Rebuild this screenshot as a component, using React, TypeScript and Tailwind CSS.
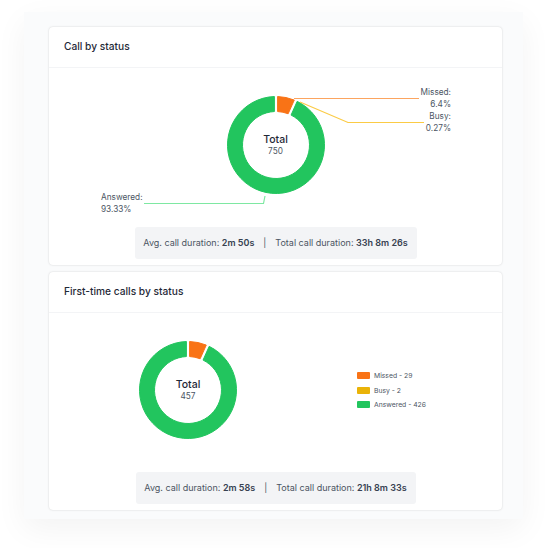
const pt = (cx: number, cy: number, r: number, deg: number) => {
  const a = (deg * Math.PI) / 180;
  return `${(cx + r * Math.sin(a)).toFixed(2)} ${(cy - r * Math.cos(a)).toFixed(2)}`;
};

const slice = (start: number, end: number, gap = 1.6) => {
  const R = 48.5;
  const r = 33.5;
  const c = 49;
  const oa = (Math.asin(gap / R) * 180) / Math.PI;
  const ia = (Math.asin(gap / r) * 180) / Math.PI;
  const large = end - start > 180 ? 1 : 0;
  return `M${pt(c, c, R, start + oa)} A${R} ${R} 0 ${large} 1 ${pt(c, c, R, end - oa)} L${pt(c, c, r, end - ia)} A${r} ${r} 0 ${large} 0 ${pt(c, c, r, start + ia)} Z`;
};

function Donut({ total }: { total: string }) {
  return (
    <div className="relative h-[98px] w-[98px] shrink-0">
      <svg viewBox="0 0 98 98" className="h-full w-full">
        <path d={slice(0, 24)} fill="#f97316" stroke="#f97316" strokeWidth="1" strokeLinejoin="round" />
        <path d={slice(24, 360)} fill="#22c55e" stroke="#22c55e" strokeWidth="1" strokeLinejoin="round" />
      </svg>
      <div className="absolute inset-0 flex flex-col items-center justify-center pb-[1px] text-center">
        <span className="text-[10.5px] leading-[13px] font-medium text-[#1f2937]">Total</span>
        <span className="text-[8.25px] leading-[11px] text-[#4b5563]">{total}</span>
      </div>
    </div>
  );
}

function Footer({ avg, total, width }: { avg: string; total: string; width: string }) {
  return (
    <div className={`mx-auto flex h-8 items-center justify-center rounded-[3px] bg-[#f3f4f6] text-[9px] whitespace-nowrap text-[#4b5563] ${width}`}>
      <span>
        Avg. call duration: <b className="font-semibold text-[#374151]">{avg}</b>
      </span>
      <span className="mx-[9px]">|</span>
      <span>
        Total call duration: <b className="font-semibold text-[#374151]">{total}</b>
      </span>
    </div>
  );
}

function Card({ title, children }: { title: string; children: React.ReactNode }) {
  return (
    <section className="flex h-[238px] flex-col rounded-[4px] bg-white shadow-[0_0_2px_rgba(0,0,0,0.18)]">
      <h2 className="flex h-[41px] shrink-0 items-center border-b border-[#f3f4f6] px-[15px] text-[10.2px] font-medium text-[#1f2937]">
        {title}
      </h2>
      {children}
    </section>
  );
}

function LegendItem({ color, label }: { color: string; label: string }) {
  return (
    <li className="flex items-center gap-[4px]">
      <span className={`h-[7px] w-[13px] rounded-[1px] ${color}`} />
      <span>{label}</span>
    </li>
  );
}

export default function App() {
  return (
    <div className="h-[548px] w-[548px] overflow-hidden bg-white pt-[12px] pl-[24px] font-['Inter',sans-serif]">
      <main className="flex h-[507px] w-[499px] flex-col gap-[7px] bg-[#fafbfc] pt-[15px] pr-[21px] pl-[25px] shadow-[0_10px_30px_rgba(0,0,0,0.05)]">
        <Card title="Call by status">
          <div className="relative flex flex-1 justify-center pt-[28px]">
            <Donut total="750" />
            <svg className="pointer-events-none absolute inset-0 h-full w-full" fill="none">
              <path d="M245 30.5H370" stroke="#fca560" strokeWidth="1.2" />
              <path d="M251 34L299 54.5H375" stroke="#fbcb45" strokeWidth="1.2" />
              <path d="M216 128L214.5 135.5H95" stroke="#7ee8a2" strokeWidth="1.2" />
            </svg>
            <div className="absolute top-[19px] right-[51px] text-right text-[8.25px] leading-[11.5px] text-[#4b5563]">
              <p>Missed:</p>
              <p>6.4%</p>
              <p className="mt-[1px]">Busy:</p>
              <p>0.27%</p>
            </div>
            <div className="absolute top-[124px] left-[52px] text-[8.25px] leading-[11.5px] text-[#4b5563]">
              <p>Answered:</p>
              <p>93.33%</p>
            </div>
          </div>
          <div className="pb-[6px]">
            <Footer avg="2m 50s" total="33h 8m 26s" width="w-[282px]" />
          </div>
        </Card>
        <Card title="First-time calls by status">
          <div className="flex flex-1 items-start pt-[28px] pl-[90px]">
            <Donut total="457" />
            <ul className="mt-[29px] ml-[120px] flex flex-col gap-[3.5px] text-[6.8px] leading-[11px] text-[#4b5563]">
              <LegendItem color="bg-[#f97316]" label="Missed - 29" />
              <LegendItem color="bg-[#eab308]" label="Busy - 2" />
              <LegendItem color="bg-[#22c55e]" label="Answered - 426" />
            </ul>
          </div>
          <div className="pb-[6px]">
            <Footer avg="2m 58s" total="21h 8m 33s" width="w-[280px]" />
          </div>
        </Card>
      </main>
    </div>
  );
}
